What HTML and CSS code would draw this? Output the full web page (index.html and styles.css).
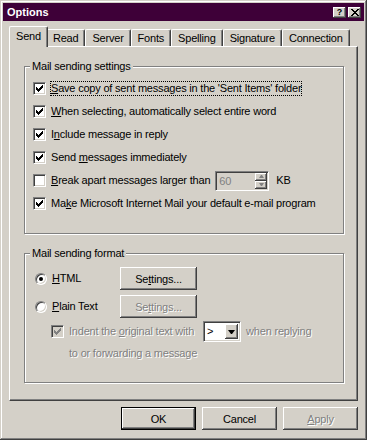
FILE: index.html
```html
<!DOCTYPE html>
<html lang="en">
<head>
  <meta charset="UTF-8" />
  <title>Options</title>
  <link rel="stylesheet" href="styles.css">
</head>
<body>
  <div class="dialog">
    <!-- Title bar -->
    <div class="titlebar">
      <span class="title">Options</span>
      <div class="title-buttons">
        <span class="title-btn help">?</span>
        <span class="title-btn">
          <svg width="8" height="7" viewBox="0 0 8 7" shape-rendering="crispEdges"><path d="M0 0h2v1h1v1h2V1h1V0h2v1H7v1H6v1H5v1h1v1h1v1h1v1H6V6H5V5H3v1H2v1H0V6h1V5h1V4h1V3H2V2H1V1H0z"/></svg>
        </span>
      </div>
    </div>

    <div class="content">
      <!-- Tabs -->
      <div class="tabs">
        <div class="tab active">Send</div>
        <div class="tab">Read</div>
        <div class="tab">Server</div>
        <div class="tab">Fonts</div>
        <div class="tab">Spelling</div>
        <div class="tab">Signature</div>
        <div class="tab">Connection</div>
      </div>

      <div class="panel">
        <fieldset class="group group-sending">
          <legend>Mail sending settings</legend>
          <div class="check-row">
            <span class="checkbox"><svg class="tick" width="7" height="7" viewBox="0 0 7 7" shape-rendering="crispEdges"><path d="M6 0h1v1H6zM5 1h2v1H5zM0 2h1v1H0zM4 2h3v1H4zM0 3h2v1H0zM3 3h3v1H3zM0 4h5v1H0zM1 5h3v1H1zM2 6h1v1H2z"/></svg></span>
            <span class="label focus"><u>S</u>ave copy of sent messages in the 'Sent Items' folder</span>
          </div>
          <div class="check-row">
            <span class="checkbox"><svg class="tick" width="7" height="7" viewBox="0 0 7 7" shape-rendering="crispEdges"><path d="M6 0h1v1H6zM5 1h2v1H5zM0 2h1v1H0zM4 2h3v1H4zM0 3h2v1H0zM3 3h3v1H3zM0 4h5v1H0zM1 5h3v1H1zM2 6h1v1H2z"/></svg></span>
            <span class="label"><u>W</u>hen selecting, automatically select entire word</span>
          </div>
          <div class="check-row">
            <span class="checkbox"><svg class="tick" width="7" height="7" viewBox="0 0 7 7" shape-rendering="crispEdges"><path d="M6 0h1v1H6zM5 1h2v1H5zM0 2h1v1H0zM4 2h3v1H4zM0 3h2v1H0zM3 3h3v1H3zM0 4h5v1H0zM1 5h3v1H1zM2 6h1v1H2z"/></svg></span>
            <span class="label">I<u>n</u>clude message in reply</span>
          </div>
          <div class="check-row">
            <span class="checkbox"><svg class="tick" width="7" height="7" viewBox="0 0 7 7" shape-rendering="crispEdges"><path d="M6 0h1v1H6zM5 1h2v1H5zM0 2h1v1H0zM4 2h3v1H4zM0 3h2v1H0zM3 3h3v1H3zM0 4h5v1H0zM1 5h3v1H1zM2 6h1v1H2z"/></svg></span>
            <span class="label">Send <u>m</u>essages immediately</span>
          </div>
          <div class="check-row">
            <span class="checkbox"></span>
            <span class="label"><u>B</u>reak apart messages larger than</span>
            <div class="spin">
              <span class="spin-value">60</span>
              <div class="spin-arrows">
                <span class="spin-arrow"><span class="arrow-up"></span></span>
                <span class="spin-arrow"><span class="arrow-down"></span></span>
              </div>
            </div>
            <span class="label unit">KB</span>
          </div>
          <div class="check-row">
            <span class="checkbox"><svg class="tick" width="7" height="7" viewBox="0 0 7 7" shape-rendering="crispEdges"><path d="M6 0h1v1H6zM5 1h2v1H5zM0 2h1v1H0zM4 2h3v1H4zM0 3h2v1H0zM3 3h3v1H3zM0 4h5v1H0zM1 5h3v1H1zM2 6h1v1H2z"/></svg></span>
            <span class="label">Ma<u>k</u>e Microsoft Internet Mail your default e-mail program</span>
          </div>
        </fieldset>

        <fieldset class="group group-format">
          <legend>Mail sending format</legend>
          <div class="format-grid">
            <div class="radio-row">
              <span class="radio checked"></span>
              <span class="label"><u>H</u>TML</span>
            </div>
            <button class="btn btn-settings">Se<u>t</u>tings...</button>
            <div class="radio-row">
              <span class="radio"></span>
              <span class="label"><u>P</u>lain Text</span>
            </div>
            <button class="btn btn-settings disabled">Se<u>t</u>tings...</button>
          </div>
          <div class="indent-row">
            <span class="checkbox disabled"><svg class="tick" width="7" height="7" viewBox="0 0 7 7" shape-rendering="crispEdges"><path d="M6 0h1v1H6zM5 1h2v1H5zM0 2h1v1H0zM4 2h3v1H4zM0 3h2v1H0zM3 3h3v1H3zM0 4h5v1H0zM1 5h3v1H1zM2 6h1v1H2z"/></svg></span>
            <span class="label muted">Indent the <u>o</u>riginal text with</span>
            <div class="combo">
              <span class="combo-value">&gt;</span>
              <span class="combo-btn"><span class="arrow-down dark"></span></span>
            </div>
            <span class="label muted after-combo">when replying</span>
          </div>
          <div class="indent-note muted">to or forwarding a message</div>
        </fieldset>
      </div>

      <!-- Dialog buttons -->
      <div class="buttons">
        <button class="btn default">OK</button>
        <button class="btn">Cancel</button>
        <button class="btn disabled"><u>A</u>pply</button>
      </div>
    </div>
  </div>
</body>
</html>
```

FILE: styles.css
```css
body {
  margin: 0;
  background-color: #d4d0c8;
  font-family: "Liberation Sans", Arial, sans-serif;
  font-size: 11px;
  letter-spacing: -0.2px;
  color: #000;
}

/* Window frame */
.dialog {
  width: 367px;
  height: 440px;
  box-sizing: border-box;
  padding: 3px;
  display: flex;
  flex-direction: column;
  box-shadow: inset -1px -1px #404040, inset 1px 1px #d4d0c8,
              inset -2px -2px #808080, inset 2px 2px #fff;
}

.titlebar {
  height: 18px;
  background-color: #3e0038;
  display: flex;
  align-items: center;
  justify-content: space-between;
  padding: 0 3px 0 4px;
}

.title {
  color: #fff;
  font-weight: bold;
  letter-spacing: 0;
}

.title-buttons {
  display: flex;
  gap: 2px;
}

.title-btn {
  width: 13px;
  height: 11px;
  box-sizing: border-box;
  background-color: #d4d0c8;
  box-shadow: inset -1px -1px #404040, inset 1px 1px #fff, inset -2px -2px #808080;
  display: flex;
  align-items: center;
  justify-content: center;
}

.title-btn.help {
  font-weight: bold;
  font-size: 9px;
  line-height: 11px;
  letter-spacing: 0;
}

.content {
  flex: 1;
  display: flex;
  flex-direction: column;
  padding: 0 6px;
}

/* Tabs */
.tabs {
  display: flex;
  align-items: flex-end;
  height: 20px;
  margin-top: 5px;
  padding-left: 2px;
}

.tab {
  height: 16px;
  line-height: 16px;
  padding: 0 6px;
  border: 1px solid;
  border-bottom: none;
  border-color: #fff #404040 #404040 #fff;
  border-radius: 2px 2px 0 0;
  box-shadow: inset -1px 0 #808080;
  background-color: #d4d0c8;
}

.tab.active {
  height: 20px;
  line-height: 18px;
  margin: 0 -2px -1px;
  position: relative;
  z-index: 1;
}

.panel {
  height: 355px;
  box-sizing: border-box;
  border: 1px solid;
  border-color: #fff #404040 #404040 #fff;
  box-shadow: inset -1px -1px #808080;
  padding: 13px 13px 0 14px;
}

/* Group boxes */
.group {
  margin: 0;
  min-width: 0;
  border: 1px solid #808080;
  box-shadow: 1px 1px 0 #fff, inset 1px 1px 0 #fff;
  padding: 4px 0 18px 8px;
}

.group legend {
  padding: 0 2px;
  margin-left: -3px;
  line-height: 13px;
  background-color: #d4d0c8;
}

.group-format {
  margin-top: 13px;
  padding: 7px 0 22px 8px;
}

.check-row {
  display: flex;
  align-items: center;
  gap: 4px;
  height: 23px;
}

.label {
  border: 1px solid transparent;
  line-height: 13px;
  white-space: nowrap;
}

.label.focus {
  border: 1px dotted #000;
}

.label.unit {
  margin-left: 2px;
}

.checkbox {
  width: 13px;
  height: 13px;
  flex-shrink: 0;
  box-sizing: border-box;
  background-color: #fff;
  border: 1px solid;
  border-color: #808080 #fff #fff #808080;
  box-shadow: inset 1px 1px #404040, inset -1px -1px #d4d0c8;
  display: flex;
  align-items: center;
  justify-content: center;
}

.checkbox.disabled {
  background-color: #d4d0c8;
}

.checkbox.disabled .tick {
  fill: #808080;
}

/* Spin box */
.spin {
  width: 54px;
  height: 20px;
  box-sizing: border-box;
  display: flex;
  border: 1px solid;
  border-color: #808080 #fff #fff #808080;
  box-shadow: inset 1px 1px #404040, inset -1px -1px #d4d0c8;
  padding: 1px;
}

.spin-value {
  flex: 1;
  padding-left: 2px;
  line-height: 16px;
  color: #808080;
}

.spin-arrows {
  width: 12px;
  display: flex;
  flex-direction: column;
}

.spin-arrow {
  flex: 1;
  background-color: #d4d0c8;
  box-shadow: inset -1px -1px #404040, inset 1px 1px #fff, inset -2px -2px #808080;
  display: flex;
  align-items: center;
  justify-content: center;
}

.arrow-up,
.arrow-down {
  width: 1px;
  height: 0;
  border-left: 2px solid transparent;
  border-right: 2px solid transparent;
}

.arrow-up {
  border-bottom: 3px solid #808080;
}

.arrow-down {
  border-top: 3px solid #808080;
}

.arrow-down.dark {
  border-left-width: 3px;
  border-right-width: 3px;
  border-top: 4px solid #000;
}

/* Format section */
.format-grid {
  display: grid;
  grid-template-columns: 87px 77px;
  row-gap: 5px;
  align-items: center;
}

.radio-row {
  display: flex;
  align-items: center;
  gap: 4px;
  padding-left: 2px;
}

.radio {
  width: 12px;
  height: 12px;
  box-sizing: border-box;
  border-radius: 50%;
  background-color: #fff;
  border: 1px solid;
  border-color: #808080 #fff #fff #808080;
  box-shadow: inset 1px 1px #404040, inset -1px -1px #d4d0c8;
  display: flex;
  align-items: center;
  justify-content: center;
}

.radio.checked::after {
  content: "";
  width: 4px;
  height: 4px;
  border-radius: 50%;
  background-color: #000;
}

.indent-row {
  display: flex;
  align-items: center;
  gap: 4px;
  height: 21px;
  margin-top: 3px;
  padding-left: 18px;
}

.combo {
  width: 38px;
  height: 21px;
  margin-left: 4px;
  box-sizing: border-box;
  display: flex;
  background-color: #fff;
  border: 1px solid;
  border-color: #808080 #fff #fff #808080;
  box-shadow: inset 1px 1px #404040, inset -1px -1px #d4d0c8;
  padding: 2px 2px 2px 2px;
}

.combo-value {
  flex: 1;
  padding-left: 1px;
  line-height: 15px;
}

.combo-btn {
  width: 13px;
  background-color: #d4d0c8;
  box-shadow: inset -1px -1px #404040, inset 1px 1px #fff, inset -2px -2px #808080;
  display: flex;
  align-items: center;
  justify-content: center;
}

.indent-note {
  margin-top: 5px;
  padding-left: 36px;
  line-height: 13px;
}

.muted,
.btn.disabled {
  color: #808080;
  text-shadow: 1px 1px 0 #fff;
}

/* Buttons */
.btn {
  width: 75px;
  height: 23px;
  box-sizing: border-box;
  padding: 0;
  border: 0;
  background-color: #d4d0c8;
  font: inherit;
  letter-spacing: inherit;
  color: #000;
  box-shadow: inset -1px -1px #404040, inset 1px 1px #fff, inset -2px -2px #808080;
}

.btn.default {
  border: 1px solid #000;
}

.btn-settings {
  width: 77px;
}

.buttons {
  display: flex;
  justify-content: flex-end;
  gap: 6px;
  margin-top: 6px;
}
```
